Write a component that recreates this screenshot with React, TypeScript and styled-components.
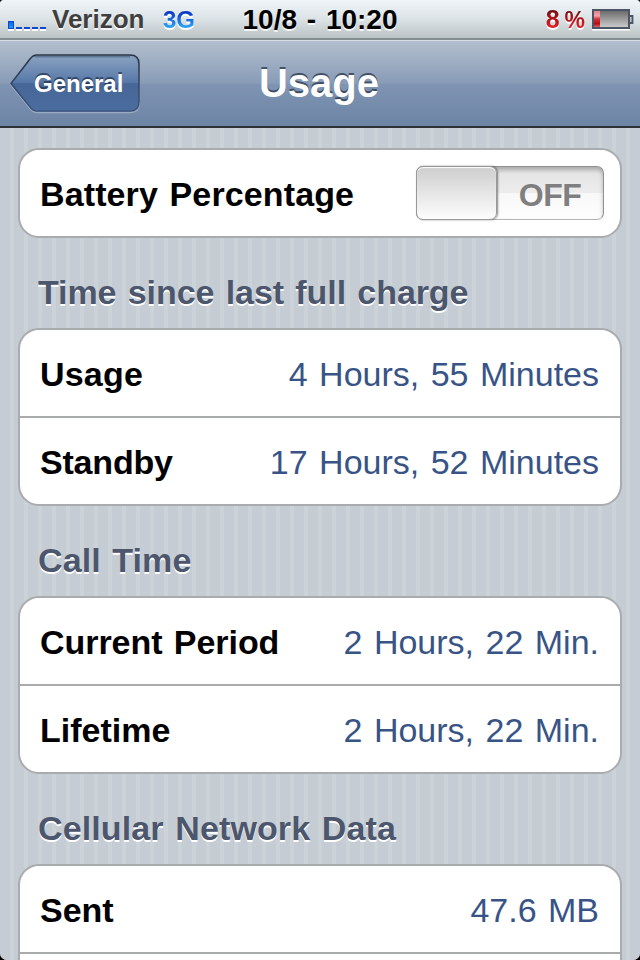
import styled, { createGlobalStyle } from "styled-components";

const GlobalStyle = createGlobalStyle`
  body {
    margin: 0;
    background: #000;
    font-family: "Liberation Sans", Arial, sans-serif;
  }
  * {
    box-sizing: border-box;
  }
`;

type Item = { label: string; value: string; tracking?: number };
type Group = { title: string; tracking: number; items: Item[]; more?: boolean };

const groups: Group[] = [
  {
    title: "Time since last full charge",
    tracking: -0.08,
    items: [
      { label: "Usage", value: "4 Hours, 55 Minutes", tracking: 0.2 },
      { label: "Standby", value: "17 Hours, 52 Minutes", tracking: -0.2 },
    ],
  },
  {
    title: "Call Time",
    tracking: 0.1,
    items: [
      { label: "Current Period", value: "2 Hours, 22 Min.", tracking: -0.05 },
      { label: "Lifetime", value: "2 Hours, 22 Min." },
    ],
  },
  {
    title: "Cellular Network Data",
    tracking: 0.12,
    items: [{ label: "Sent", value: "47.6 MB" }],
    more: true,
  },
];

const BackButton = () => (
  <BackRoot>
    <BackShape width="132" height="62" viewBox="0 0 132 62">
      <defs>
        <linearGradient id="back" x1="0" y1="0" x2="0" y2="1">
          <stop offset="0" stopColor="#8ba3c1" />
          <stop offset="0.5" stopColor="#5577a8" />
          <stop offset="0.51" stopColor="#466797" />
          <stop offset="1" stopColor="#4b6c9f" />
        </linearGradient>
        <linearGradient id="edge" x1="0" y1="0" x2="0" y2="1">
          <stop offset="0" stopColor="#2b3546" />
          <stop offset="1" stopColor="#3d5680" />
        </linearGradient>
      </defs>
      <path
        d="M27 2.6H120Q129.3 2.6 129.3 12V49Q129.3 58.4 120 58.4H27Q23 58.4 20 54.5L1 31L20 6Q23 2.6 27 2.6Z"
        fill="none"
        stroke="#b4c1d3"
        strokeOpacity="0.6"
        strokeWidth="1.5"
      />
      <path
        d="M27 1H120Q129 1 129 10V48Q129 57 120 57H27Q23 57 20 53L1 29.5L20 5Q23 1 27 1Z"
        fill="url(#back)"
        stroke="url(#edge)"
        strokeWidth="1.6"
      />
      <path
        d="M25 2.7H120"
        fill="none"
        stroke="#5f7596"
        strokeWidth="1.4"
      />
    </BackShape>
    <BackLabel>General</BackLabel>
  </BackRoot>
);

const Battery = () => (
  <BatteryIcon width="43" height="23" viewBox="0 0 43 23">
    <defs>
      <linearGradient id="cell" x1="0" y1="0" x2="0" y2="1">
        <stop offset="0" stopColor="#666" />
        <stop offset="1" stopColor="#cfcfcf" />
      </linearGradient>
      <linearGradient id="charge" x1="0" y1="0" x2="0" y2="1">
        <stop offset="0" stopColor="#e0808a" />
        <stop offset="0.3" stopColor="#f6a3ab" />
        <stop offset="0.5" stopColor="#d3323a" />
        <stop offset="0.8" stopColor="#b30c12" />
        <stop offset="1" stopColor="#d86068" />
      </linearGradient>
    </defs>
    <rect x="0" y="19.5" width="38" height="2" fill="#fff" />
    <rect x="1" y="1" width="36" height="18" fill="url(#cell)" stroke="#4c5566" strokeWidth="2" />
    <rect x="2" y="2" width="6" height="16" fill="url(#charge)" />
    <path d="M38 7H40.5V14H38" fill="#bcc2c9" stroke="#4c5566" strokeWidth="1.8" />
  </BatteryIcon>
);

export default function App() {
  return (
    <>
      <GlobalStyle />
      <Screen>
        <StatusBar>
          <Carrier>
            <Signal>
              <Bar $on />
              <Bar />
              <Bar />
              <Bar />
              <Bar />
            </Signal>
            <CarrierName>Verizon</CarrierName>
            <Network>3G</Network>
          </Carrier>
          <Clock>10/8 - 10:20</Clock>
          <Power>
            <Percent>
              8<small>%</small>
            </Percent>
            <Battery />
          </Power>
        </StatusBar>
        <NavBar>
          <BackButton />
          <Title>Usage</Title>
        </NavBar>
        <Content>
          <Card>
            <Row>
              <Label $tracking={0.12}>Battery Percentage</Label>
              <Switch>
                <Knob />
                <Off>OFF</Off>
              </Switch>
            </Row>
          </Card>
          {groups.map((group) => (
            <section key={group.title}>
              <Heading $tracking={group.tracking}>{group.title}</Heading>
              <Card>
                {group.items.map((item) => (
                  <Row key={item.label}>
                    <Label $tracking={item.tracking}>{item.label}</Label>
                    <Value>{item.value}</Value>
                  </Row>
                ))}
                {group.more && <Row />}
              </Card>
            </section>
          ))}
        </Content>
      </Screen>
    </>
  );
}

const Screen = styled.div`
  width: 640px;
  height: 960px;
  overflow: hidden;
  display: flex;
  flex-direction: column;
  border-radius: 4px 4px 7px 7px;
  background: #c5ccd4;
`;

const StatusBar = styled.header`
  height: 40px;
  flex: none;
  display: grid;
  grid-template-columns: 220px 200px 220px;
  background: linear-gradient(#eff5f8, #dce3e6 50%, #bcc3c5);
  border-bottom: 2px solid #848d8f;
`;

const Carrier = styled.div`
  display: flex;
  padding-left: 8px;
`;

const Signal = styled.div`
  display: flex;
  align-items: flex-end;
  gap: 2px;
  width: 44px;
  height: 29px;
`;

const Bar = styled.i<{ $on?: boolean }>`
  width: 6px;
  height: ${(p) => (p.$on ? 8 : 2)}px;
  background: ${(p) => (p.$on ? "linear-gradient(#1266e0, #1b9bff)" : "#0d48cf")};
  border: ${(p) => (p.$on ? "1px solid #0d48cf" : "none")};
  box-shadow: 0 2px 0 #fff;
`;

const CarrierName = styled.span`
  width: 111px;
  font-size: 26px;
  font-weight: bold;
  line-height: 38px;
  color: #3f3f3f;
  text-shadow: 0 2px 0 rgba(255, 255, 255, 0.8);
`;

const Network = styled.span`
  height: 38px;
  font-size: 24px;
  font-weight: bold;
  line-height: 40px;
  color: transparent;
  background: linear-gradient(#0a2fc0 11px, #2cb0ff 29px);
  background-clip: text;
  -webkit-background-clip: text;
  filter: drop-shadow(0 2px 0 #fff);
`;

const Clock = styled.span`
  font-size: 28px;
  font-weight: bold;
  line-height: 40px;
  text-align: center;
  white-space: nowrap;
  word-spacing: 2px;
  color: #000;
  text-shadow: 0 2px 0 rgba(255, 255, 255, 0.8);
`;

const Power = styled.div`
  display: flex;
  justify-content: flex-end;
  padding-right: 5px;
`;

const Percent = styled.span`
  height: 38px;
  margin-right: 7px;
  font-size: 25px;
  font-weight: bold;
  line-height: 39px;
  color: transparent;
  background: linear-gradient(#6d1014 10px, #e51c23 27px);
  background-clip: text;
  -webkit-background-clip: text;
  filter: drop-shadow(0 2px 0 #fff);

  small {
    margin-left: 5px;
    font-size: 23px;
  }
`;

const BatteryIcon = styled.svg`
  margin-top: 9px;
`;

const NavBar = styled.nav`
  height: 88px;
  flex: none;
  display: grid;
  grid-template-columns: 149px 1fr 151px;
  background: linear-gradient(#b3bfce, #889bb6 50%, #7f94b3 51%, #6d84a4);
  border-top: 1px solid #d9dfe5;
  border-bottom: 2px solid #2d3034;
`;

const BackRoot = styled.div`
  display: grid;
  width: 132px;
  height: 62px;
  margin: 13px 0 0 10px;
`;

const BackShape = styled.svg`
  grid-area: 1 / 1;
`;

const BackLabel = styled.span`
  grid-area: 1 / 1;
  z-index: 1;
  padding-left: 24px;
  font-size: 24px;
  font-weight: bold;
  line-height: 60px;
  color: #fff;
  text-shadow: 0 -2px 0 rgba(30, 45, 70, 0.7);
`;

const Title = styled.h1`
  margin: 0;
  font-size: 40px;
  line-height: 84px;
  text-align: center;
  color: #fff;
  text-shadow: 0 -2px 0 rgba(45, 58, 78, 0.8);
`;

const Content = styled.main`
  flex: 1;
  min-height: 0;
  padding: 20px 18px 0;
  background: repeating-linear-gradient(
    to right,
    #c5ccd4 0 10px,
    #cbd2d8 10px 14px
  );
`;

const Card = styled.div`
  border: 2px solid #a9abad;
  border-radius: 21px;
  background: #fff;
`;

const Row = styled.div`
  height: 86px;
  display: flex;
  align-items: center;
  justify-content: space-between;
  padding: 0 16px 0 20px;

  & + & {
    height: 88px;
    border-top: 2px solid #a9abad;
  }
`;

const Label = styled.span<{ $tracking?: number }>`
  padding-top: 2px;
  font-size: 34px;
  font-weight: bold;
  line-height: 40px;
  letter-spacing: ${(p) => p.$tracking ?? 0}px;
  word-spacing: 2px;
  color: #000;
`;

const Value = styled.span`
  margin-right: 5px;
  padding-top: 2px;
  font-size: 34px;
  line-height: 40px;
  word-spacing: 2px;
  color: #385487;
`;

const Heading = styled.h2<{ $tracking: number }>`
  height: 90px;
  margin: 0;
  padding: 34px 0 0 20px;
  font-size: 34px;
  line-height: 40px;
  letter-spacing: ${(p) => p.$tracking}px;
  word-spacing: 2px;
  color: #4c566c;
  text-shadow: 0 2px 0 #fff;
`;

const Switch = styled.div`
  display: flex;
  width: 188px;
  height: 54px;
  border: 1px solid #8f8f8f;
  border-bottom-color: #b5b5b5;
  border-radius: 7px;
  background: linear-gradient(#e2e2e2, #ededed 50%, #f8f8f8 51%, #fefefe);
  box-shadow: inset 0 3px 4px rgba(0, 0, 0, 0.25);
`;

const Knob = styled.div`
  width: 81px;
  height: 54px;
  margin: -1px 0 0 -1px;
  border: 1px solid #989898;
  border-radius: 7px;
  background: linear-gradient(#cecece, #fdfdfd);
  box-shadow: inset 0 1px 1px #fff, 1px 0 2px rgba(0, 0, 0, 0.45);
`;

const Off = styled.span`
  flex: 1;
  font-size: 32px;
  font-weight: bold;
  line-height: 56px;
  text-align: center;
  letter-spacing: -0.5px;
  color: #7f7f7f;
`;
